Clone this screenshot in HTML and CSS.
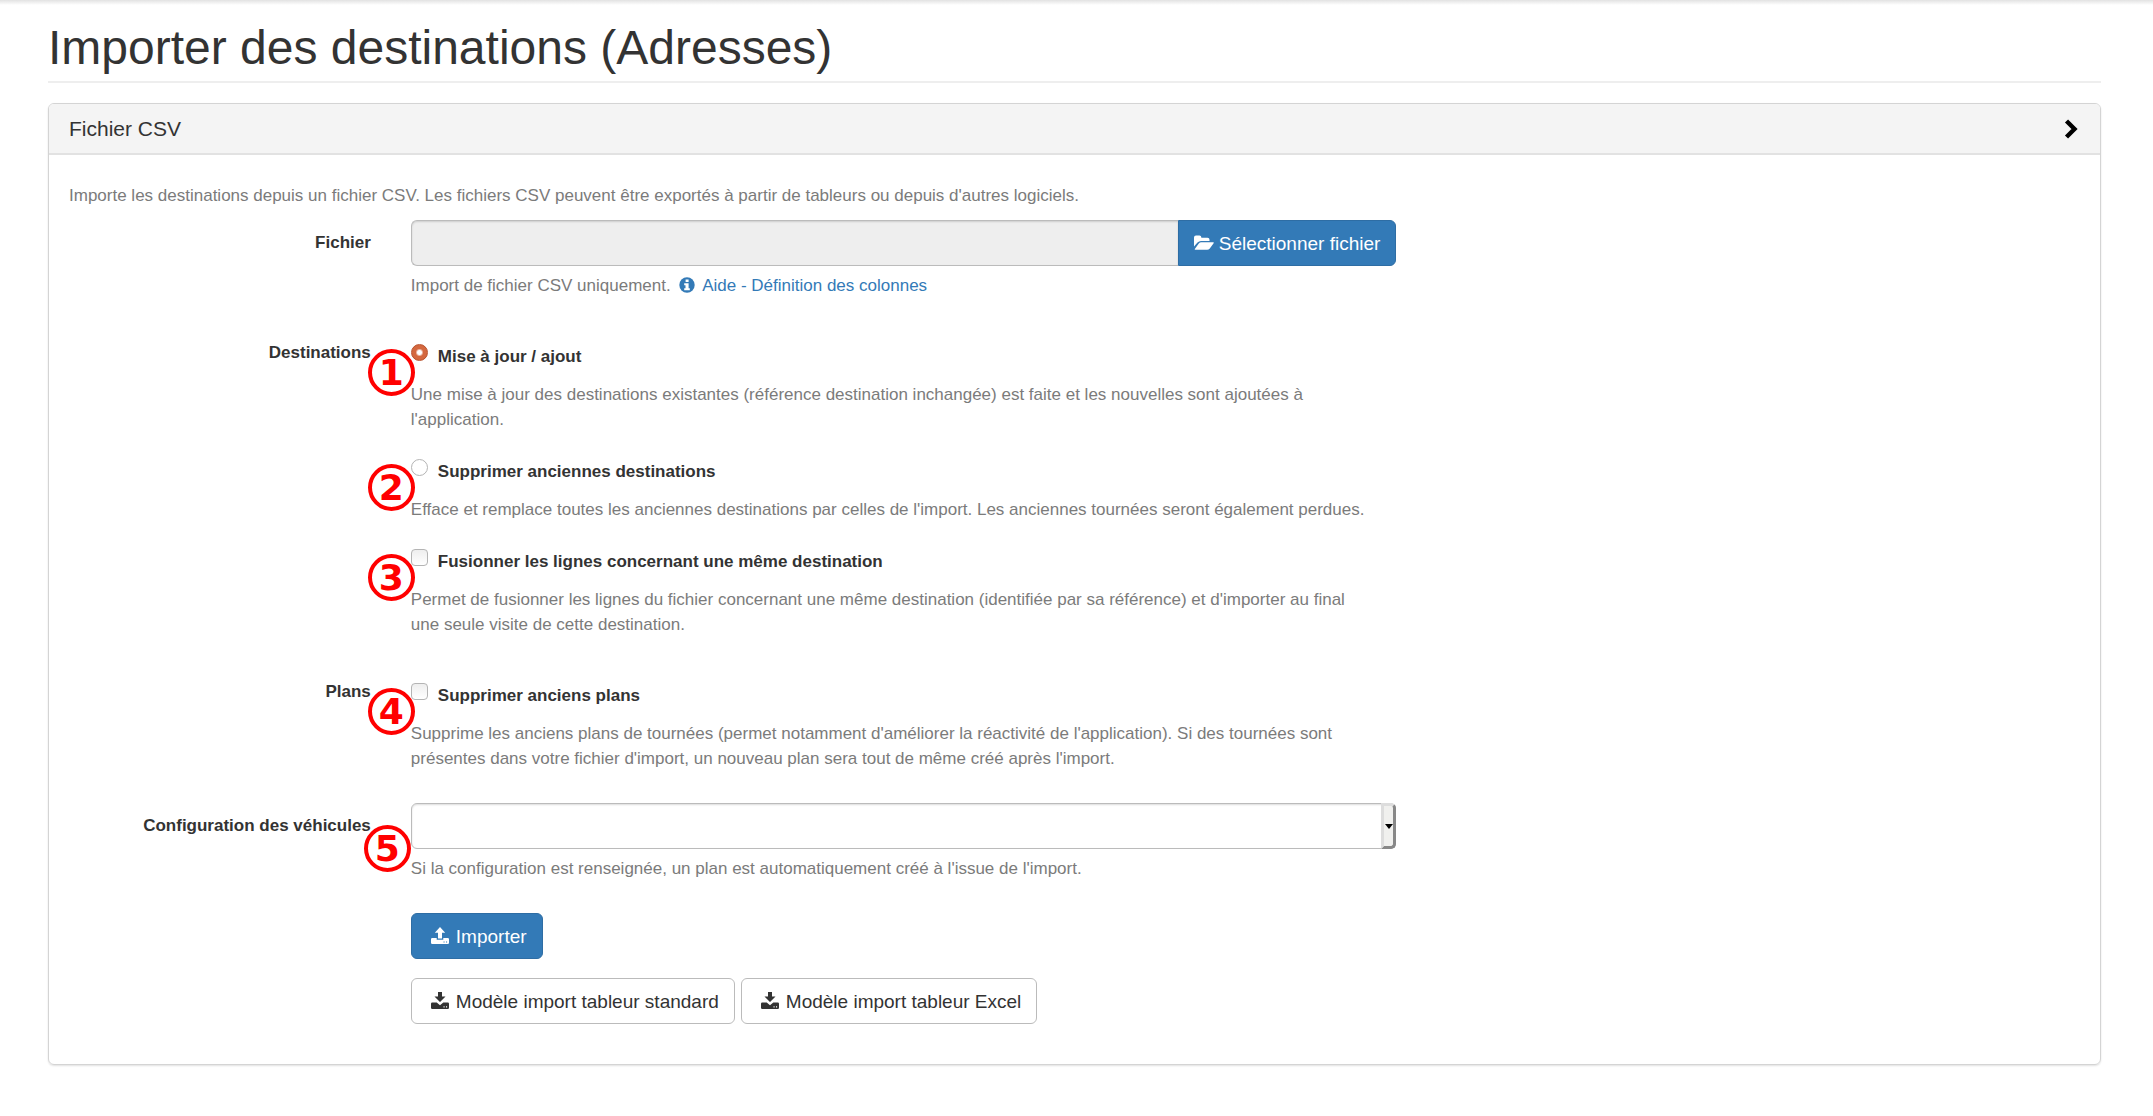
FILE: index.html
```html
<!DOCTYPE html>
<html lang="fr">
<head>
<meta charset="utf-8">
<title>Importer des destinations (Adresses)</title>
<link rel="stylesheet" href="styles.css">
</head>
<body>
<main class="page">
  <h1 class="page-title">Importer des destinations (Adresses)</h1>

  <section class="panel">
    <header class="panel-heading">
      <h2 class="panel-title">Fichier CSV</h2>
      <button class="panel-toggle" type="button" aria-label="Afficher ou masquer">
        <svg width="14" height="20" viewBox="0 0 14 20" aria-hidden="true"><path d="M2.500 2 10.500 10l-8 8" fill="none" stroke="#000" stroke-width="4.400"/></svg>
      </button>
    </header>

    <form class="panel-body">
      <p class="help intro">Importe les destinations depuis un fichier CSV. Les fichiers CSV peuvent être exportés à partir de tableurs ou depuis d'autres logiciels.</p>

      <div class="row">
        <label class="row-label centered" for="file">Fichier</label>
        <div class="row-field">
          <div class="input-group">
            <input class="control" id="file" type="text" readonly>
            <button class="btn btn-primary" type="button">
              <svg width="20" height="18" viewBox="0 0 20 18" aria-hidden="true"><path fill="currentColor" d="M0 12.500V3.500Q0 1.500 2 1.500H5.500Q7.300 1.500 7.300 3.300V3.700H13.500Q15.500 3.700 15.500 5.700V7H7Q5 7 3.500 8.600zM.8 14.900 4.800 9.500Q5.700 8.300 7.300 8.300H19.300Q20.300 8.300 19.600 9.300L15.800 14.400Q14.700 15.700 13.100 15.700H1.300Q.3 15.700.8 14.900z"/></svg>
              Sélectionner fichier</button>
          </div>
          <p class="help">Import de fichier CSV uniquement.
            <a class="help-link" href="#aide"><svg class="info-icon" width="16" height="16" viewBox="0 0 16 16" aria-hidden="true"><circle cx="8" cy="8" r="7.700" fill="currentColor"/><path fill="#fff" d="M6.600 2.600h3v2.500h-3zM5.200 6.300h4.400v5h1.200v1.900H5.200v-1.900h1.300V8.200H5.200z"/></svg> Aide - Définition des colonnes</a></p>
        </div>
      </div>

      <div class="row row-options" role="group" aria-labelledby="destinations">
        <span class="row-label" id="destinations">Destinations</span>
        <div class="row-field options">
          <div class="option">
            <span class="badge">1</span>
            <label class="option-label"><input class="radio" type="radio" name="mode" checked>Mise à jour / ajout</label>
            <p class="help">Une mise à jour des destinations existantes (référence destination inchangée) est faite et les nouvelles sont ajoutées à l'application.</p>
          </div>
          <div class="option">
            <span class="badge">2</span>
            <label class="option-label"><input class="radio" type="radio" name="mode">Supprimer anciennes destinations</label>
            <p class="help">Efface et remplace toutes les anciennes destinations par celles de l'import. Les anciennes tournées seront également perdues.</p>
          </div>
          <div class="option">
            <span class="badge">3</span>
            <label class="option-label"><input class="checkbox" type="checkbox">Fusionner les lignes concernant une même destination</label>
            <p class="help">Permet de fusionner les lignes du fichier concernant une même destination (identifiée par sa référence) et d'importer au final une&nbsp;seule visite de cette destination.</p>
          </div>
        </div>
      </div>

      <div class="row row-options" role="group" aria-labelledby="plans">
        <span class="row-label" id="plans">Plans</span>
        <div class="row-field options">
          <div class="option">
            <span class="badge">4</span>
            <label class="option-label"><input class="checkbox" type="checkbox">Supprimer anciens plans</label>
            <p class="help">Supprime les anciens plans de tournées (permet notamment d'améliorer la réactivité de l'application). Si des tournées sont présentes dans votre fichier d'import, un nouveau plan sera tout de même créé après l'import.</p>
          </div>
        </div>
      </div>

      <div class="row row-select">
        <label class="row-label centered" for="vehicles">Configuration des véhicules</label>
        <div class="row-field">
          <div class="select">
            <span class="badge badge-low">5</span>
            <select class="control" id="vehicles"><option></option></select>
            <span class="select-arrow"></span>
          </div>
          <p class="help">Si la configuration est renseignée, un plan est automatiquement créé à l'issue de l'import.</p>
        </div>
      </div>

      <div class="row row-actions">
        <div class="row-field actions">
          <button class="btn btn-primary btn-wide" type="submit">
            <svg width="18" height="18" viewBox="0 0 18 18" aria-hidden="true"><path fill="currentColor" d="M9 0l5.200 5.800H11v5.700H7V5.800H3.800zM0 12.200Q0 11 1.200 11H5.700v1.800h6.600V11h4.500Q18 11 18 12.200v3.600Q18 17 16.800 17H1.200Q0 17 0 15.800zM12.500 14.400v1.100h1.100v-1.100zM15 14.400v1.100h1.100v-1.100z" fill-rule="evenodd"/></svg>
            Importer</button>
          <div class="button-row">
            <button class="btn btn-default btn-wide" type="button">
              <svg width="18" height="18" viewBox="0 0 18 18" aria-hidden="true"><path fill="currentColor" fill-rule="evenodd" d="M7 0h4v4.500h3.500L9 10 3.500 4.500H7zM0 11.700Q0 10.500 1.200 10.500H5.700L9 13.300l3.300-2.800h4.500Q18 10.500 18 11.700v4.100Q18 17 16.800 17H1.200Q0 17 0 15.800zM12.500 14.200v1.200h1.100v-1.200zM15 14.200v1.200h1.100v-1.200z"/></svg>
              Modèle import tableur standard</button>
            <button class="btn btn-default btn-wide" type="button">
              <svg width="18" height="18" viewBox="0 0 18 18" aria-hidden="true"><path fill="currentColor" fill-rule="evenodd" d="M7 0h4v4.500h3.500L9 10 3.500 4.500H7zM0 11.700Q0 10.500 1.200 10.500H5.700L9 13.300l3.300-2.800h4.500Q18 10.500 18 11.700v4.100Q18 17 16.800 17H1.200Q0 17 0 15.800zM12.500 14.200v1.200h1.100v-1.200zM15 14.200v1.200h1.100v-1.200z"/></svg>
              Modèle import tableur Excel</button>
          </div>
        </div>
      </div>
    </form>
  </section>
</main>
</body>
</html>
```
FILE: styles.css
```css
* { box-sizing: border-box; }

body {
  margin: 0;
  background: #fff;
  color: #333;
  font-family: "Liberation Sans", Arial, sans-serif;
  font-size: 17px;
  line-height: 25px;
}

h1, h2, p { margin: 0; font-weight: 400; }

.page {
  padding: 21px 52px 48px 48px;
  background: linear-gradient(#e2e2e2, #fff 5px);
}

.page-title {
  padding-bottom: 6px;
  border-bottom: 2px solid #eee;
  font-size: 48px;
  line-height: 54px;
}

.panel {
  margin-top: 20px;
  border: 1px solid #d4d4d4;
  border-radius: 6px;
  box-shadow: 0 1px 2px rgba(0, 0, 0, .12);
}

.panel-heading {
  display: flex;
  align-items: center;
  justify-content: space-between;
  padding: 12px 22px 12px 20px;
  background: #f4f4f4;
  border-bottom: 2px solid #e2e2e2;
  border-radius: 5px 5px 0 0;
}

.panel-title { font-size: 21px; line-height: 25px; }

.panel-toggle {
  display: flex;
  padding: 0;
  border: 0;
  background: none;
}

.panel-body { padding: 28px 0 40px; }

.help { color: #7b7b7b; }
.intro { padding: 0 20px; margin-bottom: 12px; }

.row {
  display: grid;
  grid-template-columns: 2fr 6fr 4fr;
}

.row-label {
  padding-right: 20px;
  font-weight: 700;
  text-align: right;
}

.centered { padding-top: 10px; }
.row-field { grid-column: 2; padding: 0 20px; min-width: 0; }
.row-field > .help { margin-top: 7px; }
.row-options { margin-top: 42px; }
.row-select, .row-actions { margin-top: 32px; }

.control {
  display: block;
  width: 100%;
  height: 46px;
  padding: 8px 16px;
  border: 1px solid #bbb;
  border-radius: 6px;
  background: #fff;
  color: #555;
  font: inherit;
  box-shadow: inset 0 1px 2px rgba(0, 0, 0, .14);
  appearance: none;
}

.control[readonly] { background: #eee; }

.input-group { display: flex; }
.input-group .control { flex: 1; min-width: 0; border-right: 0; border-radius: 6px 0 0 6px; }
.input-group .btn { border-radius: 0 6px 6px 0; }

.btn {
  display: inline-flex;
  align-items: center;
  gap: 5px;
  height: 46px;
  padding: 0 15px;
  border: 1px solid #bbb;
  border-radius: 6px;
  font: inherit;
  font-size: 19px;
  white-space: nowrap;
}

.btn-wide { gap: 7px; padding: 0 15px 0 19px; }
.btn-primary { background: #337ab7; border-color: #2e6da4; color: #fff; }
.btn-default { background: #fff; color: #333; }

.help-link { margin-left: 4px; color: #337ab7; text-decoration: none; }
.info-icon { margin-right: 3px; vertical-align: -2px; }

.options {
  display: flex;
  flex-direction: column;
  gap: 27px;
  padding-top: 4px;
}

.option, .select { position: relative; }

.option-label {
  display: flex;
  gap: 10px;
  margin-bottom: 13px;
  font-weight: 700;
}

.radio, .checkbox {
  flex: none;
  width: 17px;
  height: 17px;
  margin: 0;
  border: 1px solid #b4b4b4;
  background: linear-gradient(#eee, #fff);
  appearance: none;
}

.checkbox { border-radius: 4px; }
.radio { border-radius: 50%; background: #fff; }

.radio:checked {
  border-color: #b9512c;
  background: radial-gradient(circle, #fff 2px, #d4683f 4px);
}

.badge {
  position: absolute;
  top: 5px;
  left: -43px;
  display: flex;
  align-items: center;
  justify-content: center;
  width: 47px;
  height: 47px;
  border: 4px solid #f00;
  border-radius: 50%;
  color: #f00;
  font: 700 36px/36px "DejaVu Sans", sans-serif;
}

.badge-low { top: 22px; left: -47px; }

.select-arrow {
  position: absolute;
  top: 0;
  right: 0;
  display: flex;
  align-items: center;
  justify-content: center;
  width: 15px;
  height: 46px;
  border: 3px solid #ddd;
  border-right-color: #888;
  border-bottom-color: #888;
  border-radius: 0 5px 5px 0;
  background: #f0f0ee;
  pointer-events: none;
}

.select-arrow::after {
  border: 4px solid transparent;
  border-top: 5px solid #000;
  border-bottom: 0;
  content: "";
}

.actions {
  display: flex;
  flex-direction: column;
  align-items: flex-start;
  gap: 19px;
}

.button-row { display: flex; gap: 6px; }
```
